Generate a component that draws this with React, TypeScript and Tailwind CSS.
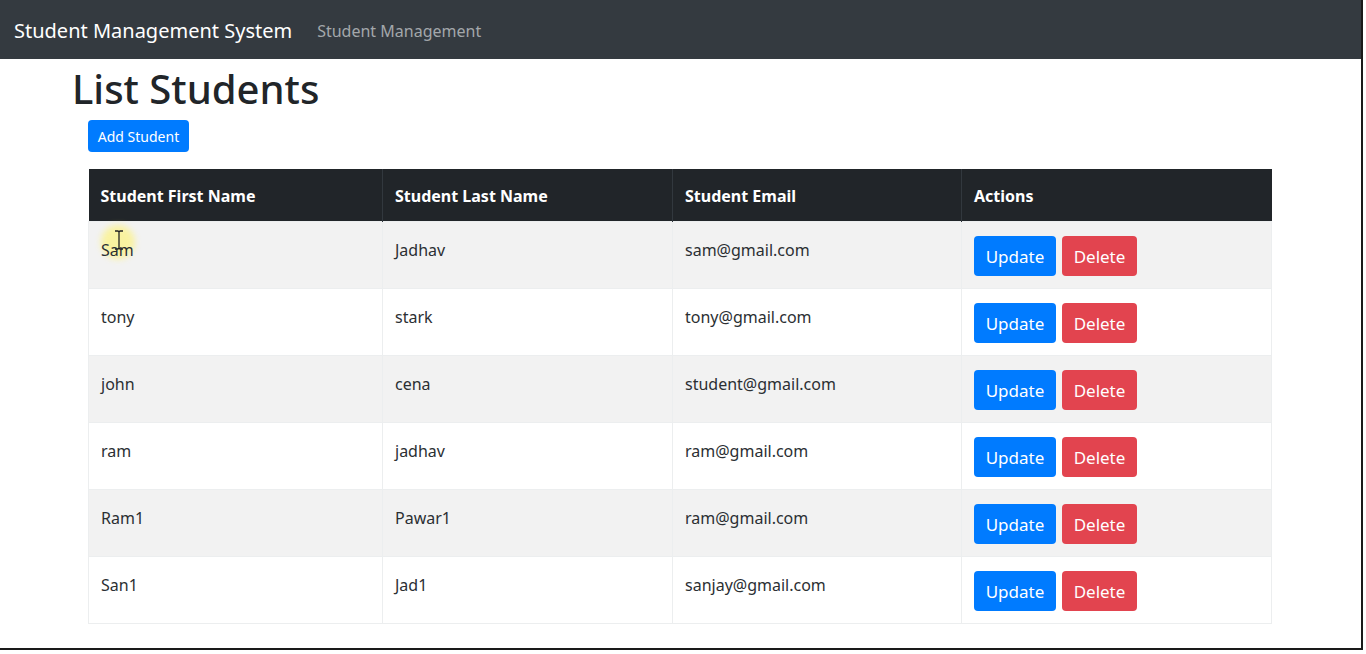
import React from 'react'

const students = [
  { first: 'Sam', last: 'Jadhav', email: 'sam@gmail.com' },
  { first: 'tony', last: 'stark', email: 'tony@gmail.com' },
  { first: 'john', last: 'cena', email: 'student@gmail.com' },
  { first: 'ram', last: 'jadhav', email: 'ram@gmail.com' },
  { first: 'Ram1', last: 'Pawar1', email: 'ram@gmail.com' },
  { first: 'San1', last: 'Jad1', email: 'sanjay@gmail.com' },
]

export default function App() {
  return (
    <div className="w-[1366px] h-[654px] bg-white overflow-hidden font-['Noto_Sans',sans-serif] text-[#212529]">
      <div className="w-[1363px] h-[650px] border-r-2 border-b-2 border-[#1a1a1a] relative">
        {/* NAVBAR */}
        <nav className="h-[59px] bg-[#343a40] flex items-center px-[14px] pt-[2px]">
          <span className="text-[20px] text-white">Student Management System</span>
          <span className="ml-[25px] text-[16px] text-[#a3a7ab]">Student Management</span>
        </nav>

        <div className="pl-[72px]">
          <h1 className="text-[40px] leading-[58px] font-medium mt-[1px]">List Students</h1>

          <div className="pl-[16px]">
            <button className="mt-[2px] h-[32px] w-[101px] rounded-[4px] bg-[#007bff] text-white text-[14px]">
              Add Student
            </button>

            {/* TABLE */}
            <table className="mt-[17px] w-[1184px] border-collapse text-[16px]">
              <thead>
                <tr className="bg-[#212529] text-white h-[52px]">
                  <th className="w-[294px] text-left font-bold px-[12px] pt-[2px] border-r border-[#32383e]">Student First Name</th>
                  <th className="w-[290px] text-left font-bold px-[12px] pt-[2px] border-r border-[#32383e]">Student Last Name</th>
                  <th className="w-[289px] text-left font-bold px-[12px] pt-[2px] border-r border-[#32383e]">Student Email</th>
                  <th className="text-left font-bold px-[12px] pt-[2px]">Actions</th>
                </tr>
              </thead>
              <tbody>
                {students.map((s, i) => (
                  <tr key={i} className={i % 2 === 0 ? 'bg-[#f2f2f2] h-[67px]' : 'bg-white h-[67px]'}>
                    <td className="align-top pt-[16px] px-[12px] border border-[#eceeef] relative">
                      {i === 0 && (
                        <span className="absolute left-[12px] top-[3px] w-[34px] h-[34px] rounded-full bg-[#fff36b] opacity-60 blur-[3px]" />
                      )}
                      {i === 0 && (
                        <svg className="absolute left-[25px] top-[8px]" width="10" height="20" viewBox="0 0 10 20">
                          <path d="M1 1h3l1 1 1-1h3M5 2v16M1 19h3l1-1 1 1h3" fill="none" stroke="#222" strokeWidth="1.3" />
                        </svg>
                      )}
                      <span className="relative text-[#2b2f33]">{s.first}</span>
                    </td>
                    <td className="align-top pt-[16px] px-[12px] border border-[#eceeef] text-[#2b2f33]">{s.last}</td>
                    <td className="align-top pt-[16px] px-[12px] border border-[#eceeef] text-[#2b2f33]">{s.email}</td>
                    <td className="align-top pt-[14px] px-[12px] border border-[#eceeef]">
                      <div className="flex gap-[6px]">
                        <button className="h-[40px] w-[82px] rounded-[4px] bg-[#007bff] text-white text-[17px] pt-[2px]">Update</button>
                        <button className="h-[40px] w-[75px] rounded-[4px] bg-[#e2444f] text-white text-[17px] pt-[2px]">Delete</button>
                      </div>
                    </td>
                  </tr>
                ))}
              </tbody>
            </table>
          </div>
        </div>
      </div>
    </div>
  )
}
